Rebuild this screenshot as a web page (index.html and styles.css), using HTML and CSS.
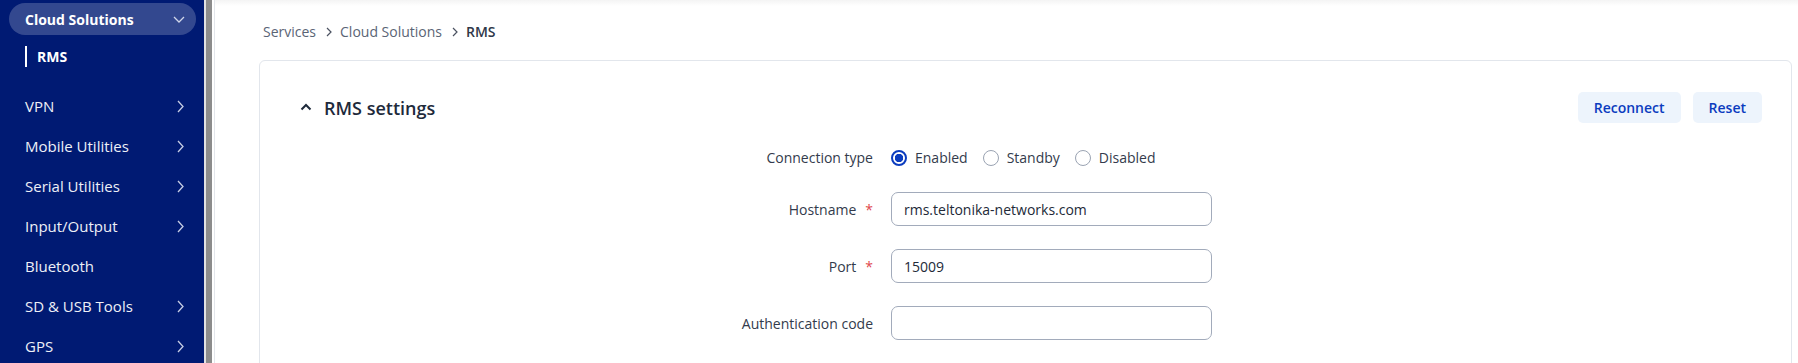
FILE: index.html
```html
<!DOCTYPE html>
<html lang="en">
<head>
<meta charset="utf-8">
<title>RMS settings</title>
<link rel="stylesheet" href="styles.css">
</head>
<body>
<div class="app">
  <aside class="sidebar">
    <nav class="nav">
      <div class="nav-pill">
        <span>Cloud Solutions</span>
        <svg class="chev-down" width="12" height="7" viewBox="0 0 12 7"><path d="M1 1l5 5 5-5" fill="none" stroke="currentColor" stroke-width="1.3"/></svg>
      </div>
      <div class="nav-sub"><span class="sub-bar"></span><span>RMS</span></div>
      <ul class="nav-list">
        <li class="nav-item"><span>VPN</span><svg class="chev-right" width="7" height="13" viewBox="0 0 7 13"><path d="M1 1l5 5.5L1 12" fill="none" stroke="currentColor" stroke-width="1.3"/></svg></li>
        <li class="nav-item"><span>Mobile Utilities</span><svg class="chev-right" width="7" height="13" viewBox="0 0 7 13"><path d="M1 1l5 5.5L1 12" fill="none" stroke="currentColor" stroke-width="1.3"/></svg></li>
        <li class="nav-item"><span>Serial Utilities</span><svg class="chev-right" width="7" height="13" viewBox="0 0 7 13"><path d="M1 1l5 5.5L1 12" fill="none" stroke="currentColor" stroke-width="1.3"/></svg></li>
        <li class="nav-item"><span>Input/Output</span><svg class="chev-right" width="7" height="13" viewBox="0 0 7 13"><path d="M1 1l5 5.5L1 12" fill="none" stroke="currentColor" stroke-width="1.3"/></svg></li>
        <li class="nav-item"><span>Bluetooth</span></li>
        <li class="nav-item"><span>SD &amp; USB Tools</span><svg class="chev-right" width="7" height="13" viewBox="0 0 7 13"><path d="M1 1l5 5.5L1 12" fill="none" stroke="currentColor" stroke-width="1.3"/></svg></li>
        <li class="nav-item"><span>GPS</span><svg class="chev-right" width="7" height="13" viewBox="0 0 7 13"><path d="M1 1l5 5.5L1 12" fill="none" stroke="currentColor" stroke-width="1.3"/></svg></li>
      </ul>
    </nav>
    <div class="scroll-track"><div class="scroll-thumb"></div></div>
  </aside>
  <main class="main">
    <div class="breadcrumb">
      <span class="crumb">Services</span>
      <svg class="crumb-sep" width="6" height="10" viewBox="0 0 6 10"><path d="M1 1l4 4-4 4" fill="none" stroke="currentColor" stroke-width="1.2"/></svg>
      <span class="crumb">Cloud Solutions</span>
      <svg class="crumb-sep" width="6" height="10" viewBox="0 0 6 10"><path d="M1 1l4 4-4 4" fill="none" stroke="currentColor" stroke-width="1.2"/></svg>
      <span class="crumb current">RMS</span>
    </div>
    <section class="card">
      <header class="card-head">
        <div class="card-title">
          <svg class="caret-up" width="12" height="8" viewBox="0 0 12 8"><path d="M1.5 6.5L6 2l4.5 4.5" fill="none" stroke="currentColor" stroke-width="2"/></svg>
          <h2>RMS settings</h2>
        </div>
        <div class="actions">
          <button class="btn">Reconnect</button>
          <button class="btn">Reset</button>
        </div>
      </header>
      <div class="form">
        <div class="label">Connection type</div>
        <div class="control radios">
          <label class="radio"><span class="dot checked"></span><span>Enabled</span></label>
          <label class="radio"><span class="dot"></span><span>Standby</span></label>
          <label class="radio"><span class="dot"></span><span>Disabled</span></label>
        </div>

        <div class="label">Hostname<span class="req">*</span></div>
        <div class="control"><div class="input">rms.teltonika-networks.com</div></div>

        <div class="label">Port<span class="req">*</span></div>
        <div class="control"><div class="input">15009</div></div>

        <div class="label">Authentication code</div>
        <div class="control"><div class="input"></div></div>
      </div>
    </section>
  </main>
</div>
</body>
</html>
```

FILE: styles.css
```css
* { box-sizing: border-box; }
html, body { margin: 0; padding: 0; }
body {
  width: 1798px;
  height: 363px;
  overflow: hidden;
  background: #ffffff;
  font-family: "Open Sans", "Liberation Sans", sans-serif;
  font-size: 14px;
  color: #333b4c;
}
.app {
  display: flex;
  height: 363px;
}

/* Sidebar */
.sidebar {
  display: flex;
  flex: 0 0 214px;
  height: 100%;
}
.nav {
  width: 204px;
  background: #001a73;
  color: #eef0f7;
  padding-top: 3px;
}
.nav-pill {
  display: flex;
  align-items: center;
  justify-content: space-between;
  height: 32px;
  margin: 0 8px 0 9px;
  padding: 0 11px 0 16px;
  background: #33488f;
  border-radius: 16px;
  font-weight: 700;
  color: #ffffff;
}
.chev-down { color: #d0d6ea; }
.nav-sub {
  display: flex;
  align-items: center;
  height: 43px;
  padding-left: 25px;
  font-weight: 700;
  color: #ffffff;
}
.sub-bar {
  width: 2px;
  height: 21px;
  background: #ffffff;
  margin-right: 10px;
}
.nav-list {
  list-style: none;
  margin: 8px 0 0;
  padding: 0;
}
.nav-item {
  display: flex;
  align-items: center;
  justify-content: space-between;
  height: 40px;
  padding: 0 20px 0 25px;
  font-size: 15px;
  font-weight: 500;
}
.chev-right { color: #c6cde3; }
.scroll-track {
  width: 10px;
  padding: 0 2px;
  background: linear-gradient(to right, #e2e2e2 0 2px, #ffffff 2px);
}
.scroll-thumb {
  width: 6px;
  height: 100%;
  background: #8c8c8c;
}

/* Main */
.main {
  flex: 1;
  border-left: 1px solid #e3e6eb;
  padding: 22px 6px 0 44px;
  background: linear-gradient(to bottom, #f4f4f4 0, #ffffff 6px);
}
.breadcrumb {
  display: flex;
  align-items: center;
  height: 20px;
  padding-left: 4px;
  margin-bottom: 18px;
  color: #5a6475;
  line-height: 20px;
}
.crumb-sep {
  margin: 0 8px 0 10px;
  color: #4b5261;
}
.crumb.current {
  font-weight: 600;
  color: #2f3748;
}

/* Card */
.card {
  border: 1px solid #e2e6ec;
  border-radius: 6px;
  min-height: 400px;
  background: #ffffff;
}
.card-head {
  display: flex;
  align-items: center;
  justify-content: space-between;
  padding: 31px 29px 0 40px;
}
.card-title {
  display: flex;
  align-items: center;
  gap: 12px;
  color: #1e2a3b;
}
.caret-up { margin-top: -1px; }
.card-title h2 {
  margin: 0;
  font-size: 18px;
  font-weight: 600;
  line-height: 24px;
  color: #1e2a3b;
}
.actions {
  display: flex;
  gap: 12px;
}
.btn {
  height: 31px;
  padding: 0 16px;
  border: none;
  border-radius: 5px;
  background: #edf4fc;
  color: #0b3cbf;
  font-family: "Open Sans", "Liberation Sans", sans-serif;
  font-size: 14px;
  font-weight: 600;
}

/* Form */
.form {
  display: grid;
  grid-template-columns: 613px 321px;
  grid-template-rows: 23px 34px 34px 34px;
  column-gap: 18px;
  row-gap: 23px;
  margin-top: 23px;
}
.label {
  display: flex;
  align-items: center;
  justify-content: flex-end;
  color: #333b4c;
}
.req {
  color: #e0474c;
  margin-left: 9px;
}
.control {
  display: flex;
  align-items: center;
}
.radios { gap: 15px; }
.radio {
  display: flex;
  align-items: center;
  gap: 8px;
  color: #333b4c;
}
.dot {
  width: 16px;
  height: 16px;
  border: 1px solid #9aa3b2;
  border-radius: 50%;
  background: #ffffff;
}
.dot.checked {
  border: 2px solid #0b3cbf;
  background: radial-gradient(circle, #0b3cbf 0 4px, #ffffff 4.5px);
}
.input {
  display: flex;
  align-items: center;
  width: 321px;
  height: 34px;
  padding: 0 12px;
  border: 1px solid #a2abbb;
  border-radius: 7px;
  color: #222a38;
}
```
